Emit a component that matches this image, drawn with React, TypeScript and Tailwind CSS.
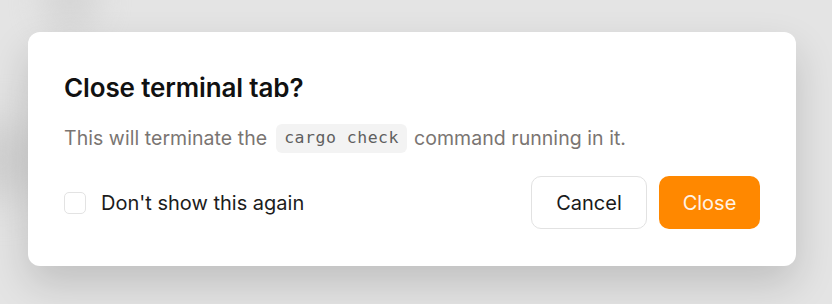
import React from "react";

export default function App() {
  return (
    <div
      className="w-[832px] h-[304px] bg-[#e4e4e4] overflow-hidden relative"
      style={{ fontFamily: "Inter, 'Noto Sans', sans-serif" }}
    >
      <div className="absolute left-[40px] top-[-30px] w-[60px] h-[60px] rounded-full bg-[#d6d6d6] blur-[14px]" />
      <div className="absolute left-[-40px] top-[120px] w-[80px] h-[80px] rounded-full bg-[#d0d0d0] blur-[20px]" />
      <div className="relative pt-[32px] pl-[28px]">
        <div className="w-[768px] h-[234px] bg-white rounded-[12px] shadow-[0_18px_40px_rgba(0,0,0,0.16)] px-[36px] pt-[40px] pb-[37px] flex flex-col">
          <h1 className="text-[26px] leading-[32px] font-semibold text-[#111111] tracking-[-0.005em]">
            Close terminal tab?
          </h1>
          <p className="mt-[19px] text-[19.5px] leading-[30px] text-[#7a7572] flex items-center tracking-[0.05px]">
            This will terminate the
            <code
              className="ml-[9px] mr-[7px] px-[8px] h-[29px] inline-flex items-center rounded-[6px] bg-[#f3f3f3] text-[16.5px] tracking-[0.5px] text-[#5f5f5f]"
              style={{ fontFamily: "'DejaVu Sans Mono', 'Liberation Mono', monospace" }}
            >
              cargo check
            </code>
            command running in it.
          </p>
          <div className="mt-auto flex items-center justify-between">
            <label className="flex items-center gap-[15px]">
              <span className="w-[22px] h-[22px] rounded-[5px] border border-[#e3e3e3] bg-white" />
              <span className="text-[20px] text-[#1c1c1c]">Don't show this again</span>
            </label>
            <div className="flex items-center gap-[12px]">
              <button className="w-[116px] h-[53px] rounded-[10px] border border-[#e2e2e2] bg-white text-[20px] text-[#1a1a1a]">
                Cancel
              </button>
              <button className="w-[101px] h-[53px] rounded-[10px] bg-[#ff8800] text-[20px] text-[#fff3e6]">
                Close
              </button>
            </div>
          </div>
        </div>
      </div>
    </div>
  );
}
